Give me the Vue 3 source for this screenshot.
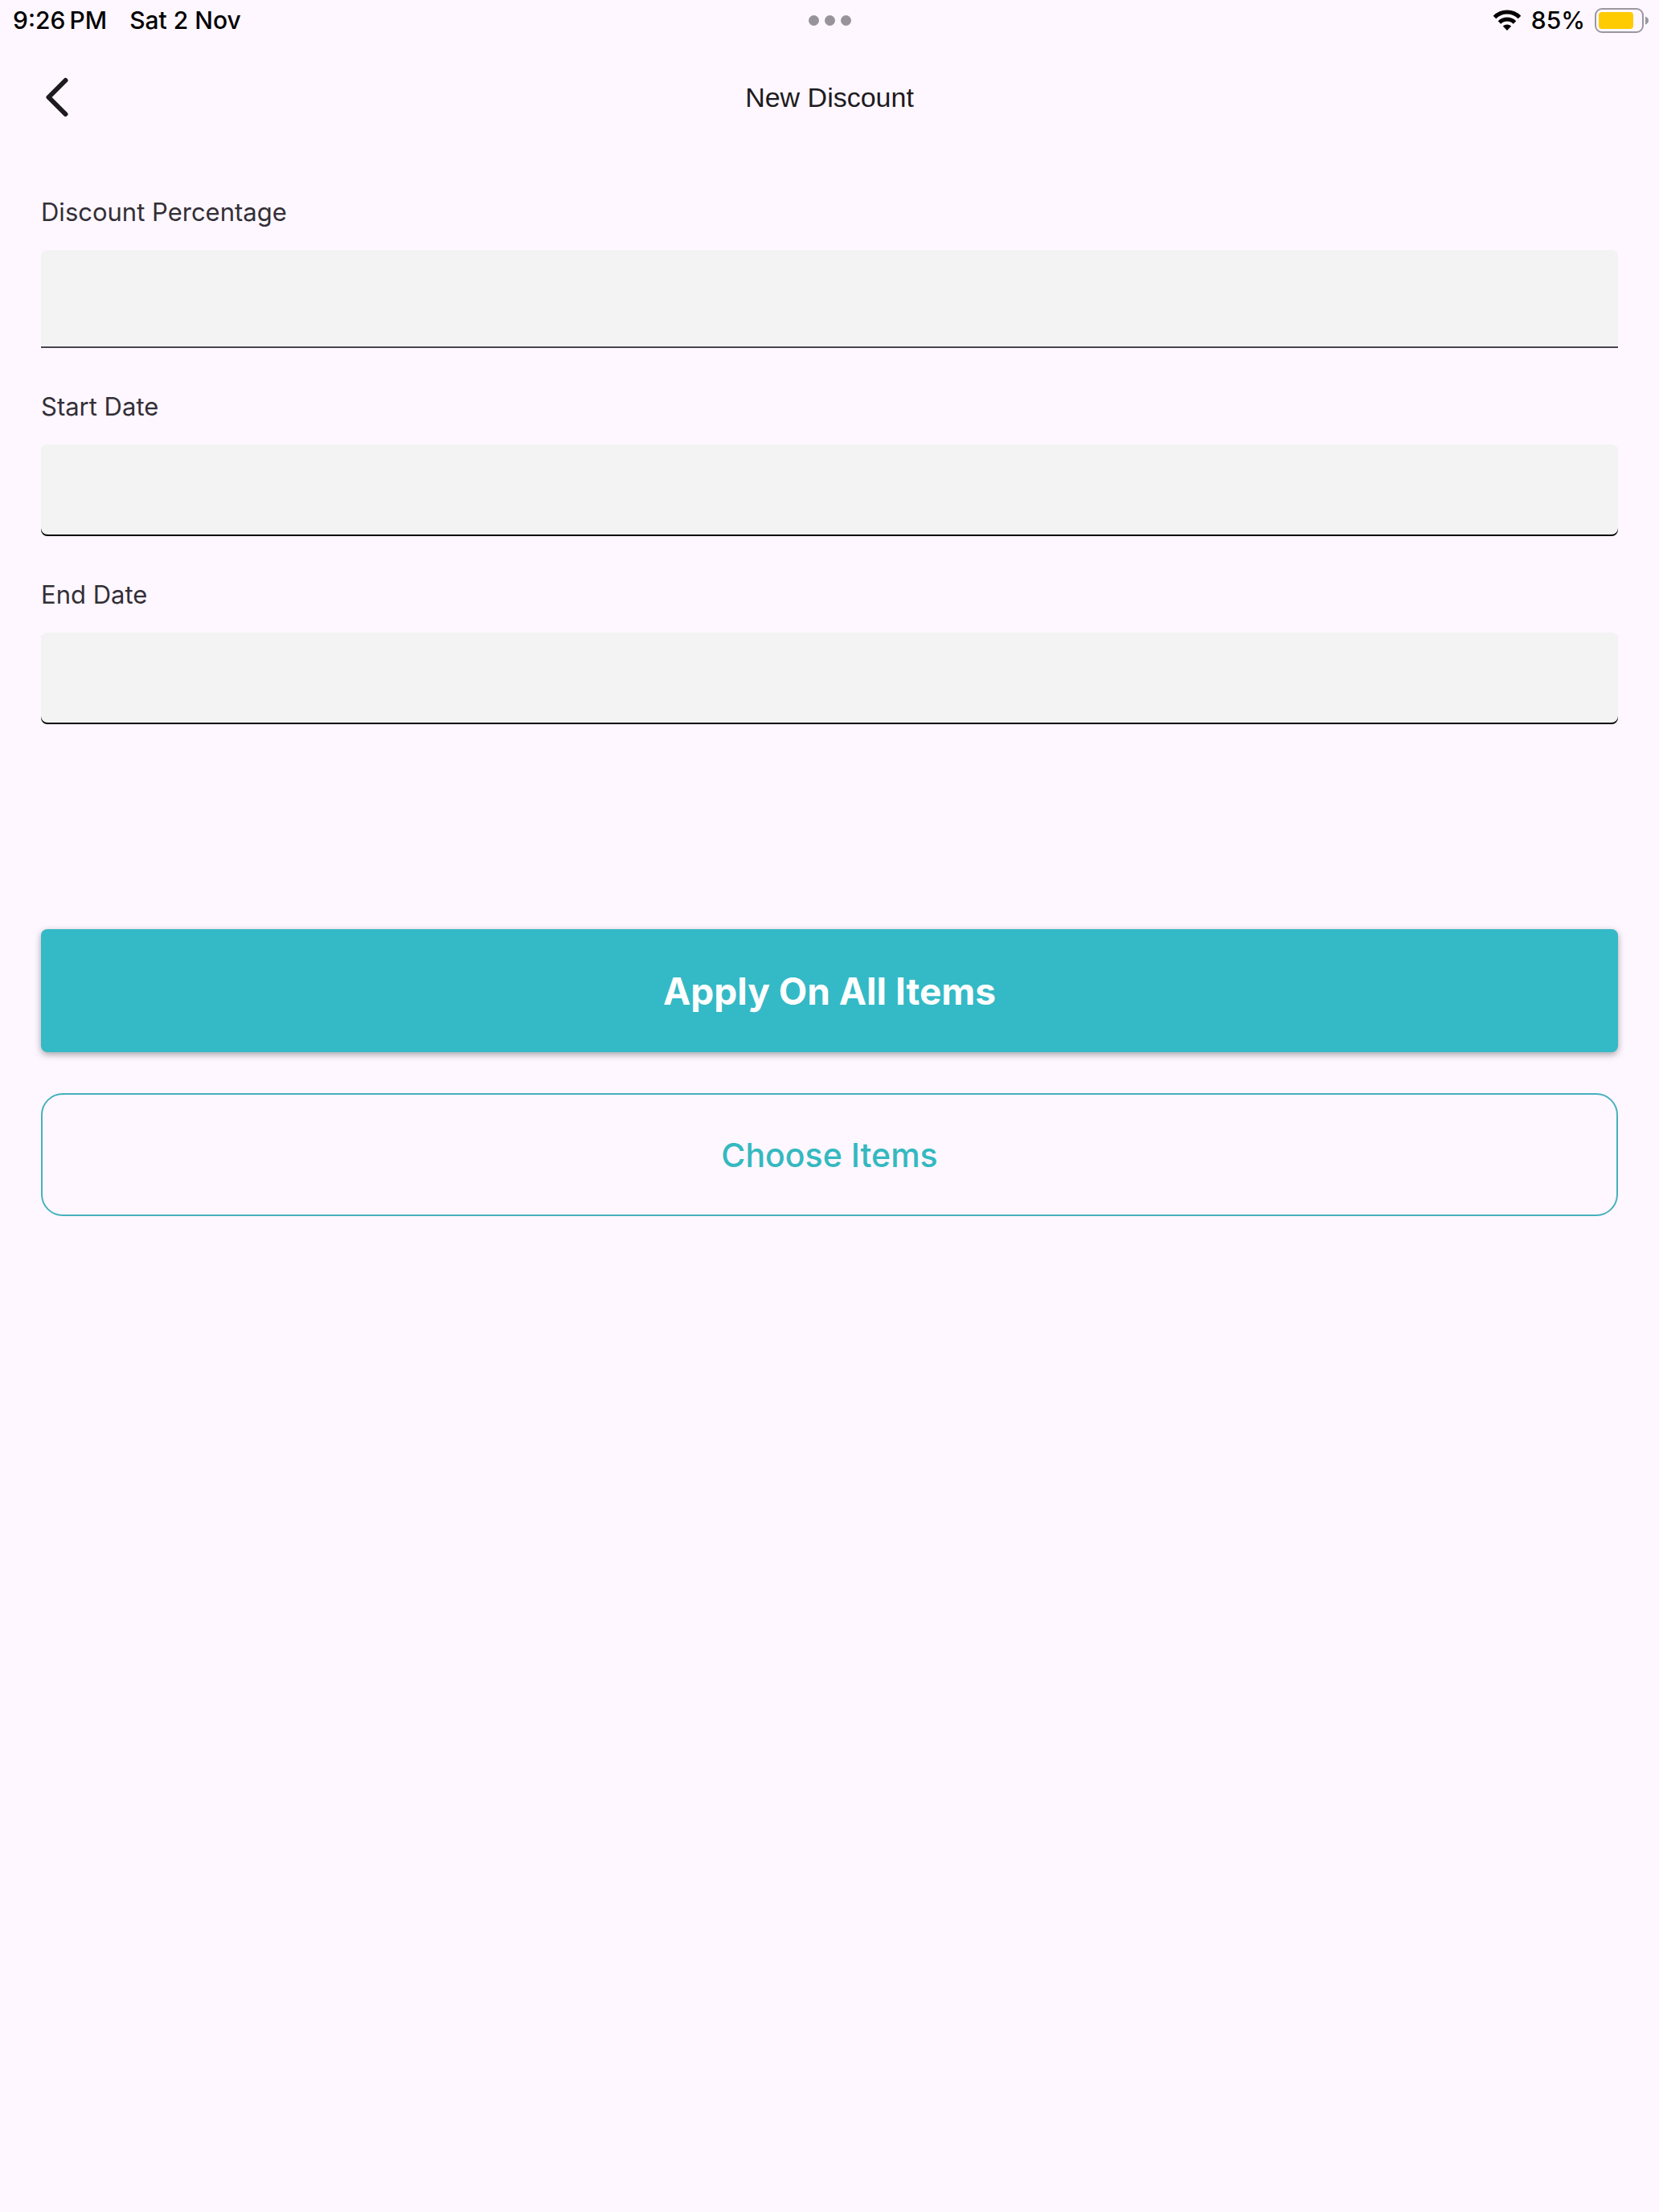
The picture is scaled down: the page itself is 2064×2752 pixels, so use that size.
<template>
  <div class="page">
    <div class="status-bar">
      <div class="status-left">
        <span>{{ time }}&#8239;PM</span>
        <span>Sat 2 Nov</span>
      </div>
      <div class="status-dots">
        <i class="dot"></i>
        <i class="dot"></i>
        <i class="dot"></i>
      </div>
      <div class="status-right">
        <svg class="wifi" viewBox="0 0 36 26" width="36" height="26">
          <path d="M2.5 9.5a22 22 0 0 1 31 0" fill="none" stroke="#000" stroke-width="5" />
          <path d="M8.5 16a13.5 13.5 0 0 1 19 0" fill="none" stroke="#000" stroke-width="5" />
          <path d="M18 26l-5.2-5.4a7.4 7.4 0 0 1 10.4 0z" fill="#000" />
        </svg>
        <span>{{ battery }}%</span>
        <svg class="battery" viewBox="0 0 68 31" width="68" height="31">
          <rect x="1" y="1" width="59" height="29" rx="8" fill="none" stroke="#9b979f" stroke-width="2" />
          <rect x="5" y="5" width="43" height="21" rx="4" fill="#fecb02" />
          <path d="M63 10.5q4 1.5 4 5t-4 5z" fill="#9b979f" />
        </svg>
      </div>
    </div>

    <header class="nav-bar">
      <button class="back-btn" type="button" aria-label="Back">
        <svg viewBox="0 0 40 50" width="40" height="50">
          <path d="M30.5 4L9.500 25L30.5 46" fill="none" stroke="#1d1b20" stroke-width="6" stroke-linecap="round" stroke-linejoin="round" />
        </svg>
      </button>
      <h1 class="title">New Discount</h1>
    </header>

    <form class="form" @submit.prevent="applyAll">
      <div class="field">
        <label for="percentage">Discount Percentage</label>
        <input id="percentage" v-model="percentage" class="percent-input" type="text" inputmode="numeric" />
      </div>
      <div class="field">
        <label for="start">Start Date</label>
        <input id="start" v-model="startDate" class="date-input" type="text" />
      </div>
      <div class="field">
        <label for="end">End Date</label>
        <input id="end" v-model="endDate" class="date-input" type="text" />
      </div>

      <div class="actions">
        <button class="apply-btn" type="submit">Apply On All Items</button>
        <button class="choose-btn" type="button" @click="chooseItems">Choose Items</button>
      </div>
    </form>
  </div>
</template>

<script setup>
import { ref } from 'vue'

const time = ref('9:26')
const battery = ref(85)

// form data
const percentage = ref('')
const startDate = ref('')
const endDate = ref('')
const scope = ref('')

const applyAll = () => {
  scope.value = 'all'
}

const chooseItems = () => {
  scope.value = 'items'
}
</script>

<style>
body {
  background: #fef7ff;
}
</style>

<style scoped>
.page {
  min-height: 100vh;
  background: #fef7ff;
  color: #1d1b20;
  font-family: Inter, "Liberation Sans", sans-serif;
}
.status-bar {
  display: grid;
  grid-template-columns: 1fr auto 1fr;
  align-items: center;
  height: 50px;
  padding: 0 12px;
  color: #000;
  font-size: 30px;
  font-weight: 500;
}
.status-left {
  display: flex;
  gap: 28px;
  padding-left: 4px;
}
.status-dots {
  display: flex;
  gap: 7px;
}
.dot {
  width: 13px;
  height: 13px;
  border-radius: 50%;
  background: #98929a;
}
.status-right {
  display: flex;
  justify-content: flex-end;
  align-items: center;
  gap: 12px;
}
.nav-bar {
  display: grid;
  grid-template-columns: 1fr auto 1fr;
  align-items: center;
  height: 142px;
  padding: 0 51px;
}
.back-btn {
  justify-self: start;
  display: flex;
  padding: 0;
  border: none;
  background: none;
}
.title {
  margin: 0;
  font-family: "Liberation Sans", Arial, sans-serif;
  font-size: 34px;
  font-weight: 400;
}
.form {
  display: flex;
  flex-direction: column;
  gap: 51px;
  padding: 50px 51px;
}
.field {
  display: flex;
  flex-direction: column;
  gap: 25px;
}
.field label {
  font-size: 31px;
  line-height: 44px;
  color: #332f37;
}
.field input {
  box-sizing: border-box;
  width: 100%;
  padding: 0 28px;
  border: none;
  background: #f3f3f3;
  font-family: inherit;
  font-size: 31px;
  outline: none;
}
.field .percent-input {
  height: 122px;
  border-bottom: 2px solid #49454f;
  border-radius: 8px 8px 0 0;
}
.field .date-input {
  height: 114px;
  border-radius: 8px;
  box-shadow: inset 0 -2px 0 #000;
}
.actions {
  display: flex;
  flex-direction: column;
  gap: 51px;
  margin-top: 204px;
}
.actions button {
  height: 153px;
  font-family: inherit;
}
.apply-btn {
  border: none;
  border-radius: 8px;
  background: #34b9c6;
  box-shadow: 0 3px 8px rgba(0, 0, 0, 0.35);
  color: #fff;
  font-size: 46px;
  font-weight: 700;
}
.choose-btn {
  border: 2px solid #45b1bc;
  border-radius: 27px;
  background: transparent;
  color: #34b9c0;
  font-size: 41px;
  font-weight: 500;
}
</style>
